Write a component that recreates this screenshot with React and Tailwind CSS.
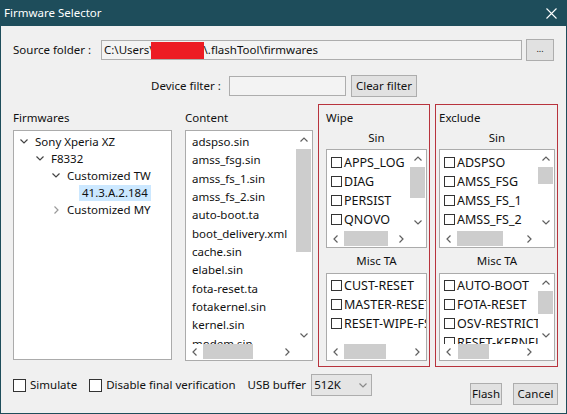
import React from 'react';

// small chevron glyphs used by tree and scrollbars
const Chevron = ({ dir = 'down', color = '#606060' }) => {
  const pts = {
    up: '0.5,4.5 4,1 7.5,4.5',
    down: '0.5,0.5 4,4 7.5,0.5',
    left: '4.5,0.5 1,4 4.5,7.5',
    right: '0.5,0.5 4,4 0.5,7.5',
  }[dir];
  const vertical = dir === 'up' || dir === 'down';
  return (
    <svg width={vertical ? 8 : 5} height={vertical ? 5 : 8} viewBox={vertical ? '0 0 8 5' : '0 0 5 8'}>
      <polyline points={pts} fill="none" stroke={color} strokeWidth="1.2" />
    </svg>
  );
};

const VScroll = ({ top = 0, size }) => (
  <div className="flex w-[16px] shrink-0 flex-col bg-white">
    <div className="flex h-[17px] shrink-0 items-center justify-center">
      <Chevron dir="up" />
    </div>
    <div className="flex flex-1 flex-col">
      <div style={{ height: top }} />
      <div className="mr-[1px] bg-[#cdcdcd]" style={{ height: size }} />
    </div>
    <div className="flex h-[17px] shrink-0 items-center justify-center">
      <Chevron dir="down" />
    </div>
  </div>
);

const HScroll = ({ left = 0, size }) => (
  <div className="flex h-[16px] flex-1 bg-white">
    <div className="flex w-[17px] shrink-0 items-center justify-center">
      <Chevron dir="left" />
    </div>
    <div className="flex flex-1">
      <div style={{ width: left }} />
      <div className="mb-[1px] bg-[#cdcdcd]" style={{ width: size }} />
    </div>
    <div className="flex w-[17px] shrink-0 items-center justify-center">
      <Chevron dir="right" />
    </div>
  </div>
);

const ListBox = ({ className = '', vbar, hbar, children }) => (
  <div className={`flex flex-col border border-[#ababab] bg-white ${className}`}>
    <div className="flex min-h-0 flex-1">
      <div className="min-w-0 flex-1 overflow-hidden">{children}</div>
      {vbar && <VScroll {...vbar} />}
    </div>
    {hbar && (
      <div className="flex h-[16px] shrink-0">
        <HScroll {...hbar} />
        {vbar && <div className="w-[16px] bg-white" />}
      </div>
    )}
  </div>
);

const Check = ({ size = 'small' }) => (
  <span
    className={`inline-block shrink-0 border border-[#333333] bg-white ${
      size === 'small' ? 'h-[11px] w-[11px]' : 'h-[13px] w-[13px]'
    }`}
  />
);

const CheckRows = ({ items, first }) => (
  <div className={`text-[12.5px] ${first}`}>
    {items.map(item => (
      <div key={item} className="flex h-[19px] items-center whitespace-nowrap pl-[4px]">
        <Check />
        <span className="ml-[2px] leading-[19px]">{item}</span>
      </div>
    ))}
  </div>
);

const Button = ({ className = '', children }) => (
  <div className={`flex h-[22px] items-center justify-center border border-[#adadad] bg-[#e1e1e1] ${className}`}>
    {children}
  </div>
);

const TreeRow = ({ level, open, leaf, selected, children }) => (
  <div className="flex h-[17px] items-center whitespace-nowrap" style={{ paddingLeft: 5 + level * 16 }}>
    {leaf ? (
      <>
        <div className="w-[12px]" />
        <span className={`px-[3px] leading-[16px] ${selected ? 'bg-[#cce8ff]' : ''}`}>{children}</span>
      </>
    ) : (
      <>
        <div className="flex w-[10px] justify-center">
          <Chevron dir={open ? 'down' : 'right'} color={open ? '#444444' : '#9a9a9a'} />
        </div>
        <span className="ml-[6px]">{children}</span>
      </>
    )}
  </div>
);

const contentFiles = [
  'adspso.sin',
  'amss_fsg.sin',
  'amss_fs_1.sin',
  'amss_fs_2.sin',
  'auto-boot.ta',
  'boot_delivery.xml',
  'cache.sin',
  'elabel.sin',
  'fota-reset.ta',
  'fotakernel.sin',
  'kernel.sin',
  'modem.sin',
  'partition.sin',
];

const Group = ({ title, className, sinItems, miscItems, sinBars, miscBars }) => (
  <div className={`flex h-[263px] flex-col border border-[#b8333d] pt-[5px] ${className}`}>
    <div className="h-[16px] leading-[16px]">{title}</div>
    <div className="mt-[4px] h-[16px] text-center leading-[16px]">Sin</div>
    <ListBox className="mt-[3px] h-[99px]" {...sinBars}>
      <CheckRows items={sinItems} first="pt-[3px]" />
    </ListBox>
    <div className="mt-[5px] h-[16px] text-center leading-[16px]">Misc TA</div>
    <ListBox className="mt-[4px] h-[88px]" {...miscBars}>
      <CheckRows items={miscItems} first="pt-[2px]" />
    </ListBox>
  </div>
);

export default function App() {
  return (
    <div className="flex h-[414px] w-[567px] flex-col bg-[#1e4d5b] font-['Noto_Sans','Liberation_Sans',sans-serif] text-[11.5px] text-[#111111]">
      {/* title bar */}
      <div className="flex h-[26px] shrink-0 items-center justify-between pl-[4px] pr-[10px] text-[11.5px] text-white">
        <span>Firmware Selector</span>
        <svg width="11" height="11" viewBox="0 0 11 11">
          <path d="M0.5 0.5 L10.5 10.5 M10.5 0.5 L0.5 10.5" stroke="#ffffff" strokeWidth="1.1" />
        </svg>
      </div>

      <div className="mx-[1px] mb-[1px] flex flex-1 flex-col bg-[#f0f0f0]">
        {/* source folder */}
        <div className="mt-[13px] flex h-[22px] items-center pl-[12px]">
          <div className="w-[88px] whitespace-nowrap">Source folder :</div>
          <div className="flex h-[20px] w-[421px] items-center overflow-hidden whitespace-nowrap border border-[#adadad] bg-[#f3f3f3] pl-[2px]">
            <span>C:\Users\</span>
            <span className="-ml-[3px] inline-block h-[17px] w-[53px] bg-[#ed1c24]" />
            <span>\.flashTool\firmwares</span>
          </div>
          <Button className="ml-[4px] w-[28px] pb-[3px] text-[9px]">...</Button>
        </div>

        {/* device filter */}
        <div className="mt-[14px] flex h-[22px] items-center pl-[150px]">
          <div className="w-[72px] whitespace-nowrap">Device filter :</div>
          <div className="ml-[6px] h-[20px] w-[117px] border border-[#adadad] bg-[#f3f3f3]" />
          <Button className="ml-[5px] w-[66px] whitespace-nowrap">Clear filter</Button>
        </div>

        {/* main area */}
        <div className="mt-[7px] flex pl-[12px]">
          <div className="flex w-[159px] flex-col pt-[6px]">
            <div className="h-[16px] leading-[16px]">Firmwares</div>
            <div className="mt-[4px] h-[230px] border border-[#ababab] bg-white pt-[2px]">
              <TreeRow level={0} open>Sony Xperia XZ</TreeRow>
              <TreeRow level={1} open>F8332</TreeRow>
              <TreeRow level={2} open>Customized TW</TreeRow>
              <TreeRow level={3} leaf selected>41.3.A.2.184</TreeRow>
              <TreeRow level={2}>Customized MY</TreeRow>
            </div>
          </div>

          <div className="ml-[13px] flex w-[128px] flex-col pt-[6px]">
            <div className="h-[16px] leading-[16px]">Content</div>
            <ListBox
              className="mt-[4px] h-[231px]"
              vbar={{ top: 1, size: 103 }}
              hbar={{ left: 0, size: 50 }}
            >
              <div className="pl-[6px] pt-[2px]">
                {contentFiles.map(f => (
                  <div key={f} className="h-[18.33px] whitespace-nowrap leading-[18.33px]">
                    {f}
                  </div>
                ))}
              </div>
            </ListBox>
          </div>

          <Group
            title="Wipe"
            className="ml-[5px] w-[112px] pl-[7px] pr-[2px]"
            sinItems={['APPS_LOG', 'DIAG', 'PERSIST', 'QNOVO']}
            miscItems={['CUST-RESET', 'MASTER-RESET', 'RESET-WIPE-FS']}
            sinBars={{ vbar: { top: 0, size: 31 }, hbar: { left: 0, size: 44 } }}
            miscBars={{ hbar: { left: 0, size: 42 } }}
          />

          <Group
            title="Exclude"
            className="ml-[5px] w-[123px] pl-[3px] pr-[2px]"
            sinItems={['ADSPSO', 'AMSS_FSG', 'AMSS_FS_1', 'AMSS_FS_2']}
            miscItems={['AUTO-BOOT', 'FOTA-RESET', 'OSV-RESTRICTION', 'RESET-KERNEL']}
            sinBars={{ vbar: { top: 0, size: 17 }, hbar: { left: 0, size: 46 } }}
            miscBars={{ vbar: { top: 0, size: 23 }, hbar: { left: 1, size: 31 } }}
          />
        </div>

        {/* bottom row */}
        <div className="mt-[7px] flex items-start pl-[12px] pr-[8px]">
          <div className="flex h-[22px] items-center whitespace-nowrap">
            <Check size="large" />
            <span className="ml-[4px]">Simulate</span>
            <span className="ml-[12px]" />
            <Check size="large" />
            <span className="ml-[4px]">Disable final verification</span>
            <span className="ml-[12px]">USB buffer</span>
            <div className="ml-[5px] flex h-[22px] w-[61px] items-center justify-between border border-[#adadad] bg-[#e5e5e5] pl-[2px] pr-[4px]">
              <span>512K</span>
              <Chevron dir="down" color="#8a8a8a" />
            </div>
          </div>
          <div className="ml-auto mt-[9px] flex gap-[11px]">
            <Button className="w-[32px]">Flash</Button>
            <Button className="w-[45px]">Cancel</Button>
          </div>
        </div>
      </div>
    </div>
  );
}
